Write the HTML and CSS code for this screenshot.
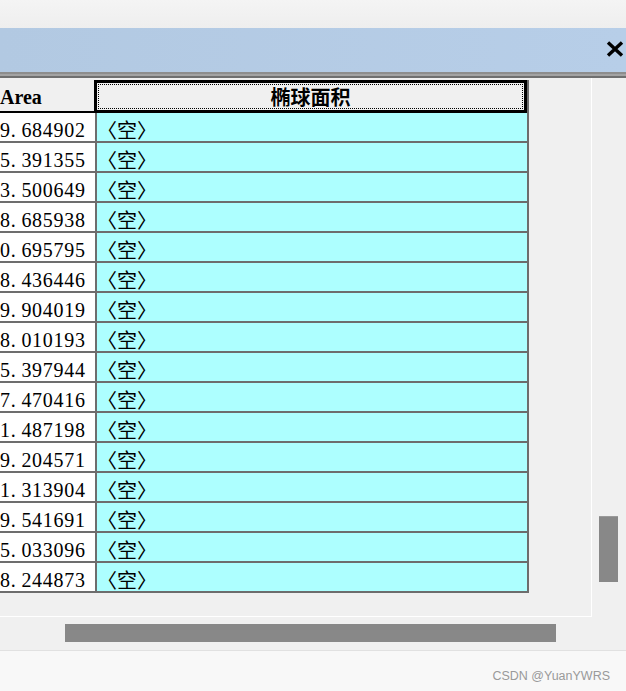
FILE: index.html
```html
<!DOCTYPE html>
<html>
<head>
<meta charset="utf-8">
<link rel="stylesheet" href="styles.css">
</head>
<body>
<div class="window">
  <div class="topbar"></div>
  <div class="titlebar">
    <svg class="close" width="18" height="16" viewBox="0 0 18 16"><path d="M2 1.5 L16 14.5 M16 1.5 L2 14.5" stroke="#000" stroke-width="3.4" stroke-linecap="butt"/></svg>
  </div>
  <div class="sep"></div>
  <div class="main">
    <div class="left">
      <div class="viewport">
        <div class="table">
          <div class="thead">
            <div class="th th-area"><span>Area</span></div>
            <div class="th th-cn"><div class="focus">椭球面积</div></div>
          </div>
          <div class="row"><div class="td num">9<span class="dot">.</span>684902</div><div class="td null">〈空〉</div></div>
          <div class="row"><div class="td num">5<span class="dot">.</span>391355</div><div class="td null">〈空〉</div></div>
          <div class="row"><div class="td num">3<span class="dot">.</span>500649</div><div class="td null">〈空〉</div></div>
          <div class="row"><div class="td num">8<span class="dot">.</span>685938</div><div class="td null">〈空〉</div></div>
          <div class="row"><div class="td num">0<span class="dot">.</span>695795</div><div class="td null">〈空〉</div></div>
          <div class="row"><div class="td num">8<span class="dot">.</span>436446</div><div class="td null">〈空〉</div></div>
          <div class="row"><div class="td num">9<span class="dot">.</span>904019</div><div class="td null">〈空〉</div></div>
          <div class="row"><div class="td num">8<span class="dot">.</span>010193</div><div class="td null">〈空〉</div></div>
          <div class="row"><div class="td num">5<span class="dot">.</span>397944</div><div class="td null">〈空〉</div></div>
          <div class="row"><div class="td num">7<span class="dot">.</span>470416</div><div class="td null">〈空〉</div></div>
          <div class="row"><div class="td num">1<span class="dot">.</span>487198</div><div class="td null">〈空〉</div></div>
          <div class="row"><div class="td num">9<span class="dot">.</span>204571</div><div class="td null">〈空〉</div></div>
          <div class="row"><div class="td num">1<span class="dot">.</span>313904</div><div class="td null">〈空〉</div></div>
          <div class="row"><div class="td num">9<span class="dot">.</span>541691</div><div class="td null">〈空〉</div></div>
          <div class="row"><div class="td num">5<span class="dot">.</span>033096</div><div class="td null">〈空〉</div></div>
          <div class="row"><div class="td num">8<span class="dot">.</span>244873</div><div class="td null">〈空〉</div></div>
        </div>
      </div>
      <div class="hscroll"><div class="hthumb"></div></div>
    </div>
    <div class="vscroll"><div class="vthumb"></div></div>
  </div>
  <div class="footer"><span>CSDN @YuanYWRS</span></div>
</div>
</body>
</html>
```

FILE: styles.css
```css
* { box-sizing: border-box; }
html, body { margin: 0; padding: 0; }
body {
  width: 626px;
  height: 691px;
  overflow: hidden;
  background: #f0f0f0;
  font-family: "Liberation Serif", "Noto Sans CJK SC", serif;
}
.window { display: flex; flex-direction: column; width: 626px; height: 691px; }
.topbar { height: 28px; background: linear-gradient(#f4f4f4, #eeeeee); }
.titlebar {
  height: 44px;
  background: linear-gradient(90deg, #b2c9e2, #b7cee8);
  display: flex;
  justify-content: flex-end;
  align-items: center;
  padding-right: 2px;
  padding-bottom: 3px;
}
.close { display: block; }
.sep {
  height: 6px;
  background: #a3a3a3;
  border-top: 2px solid #8d8d8d;
  border-bottom: 2px solid #6f6f6f;
}
.main {
  height: 573px;
  display: flex;
  background: #f0f0f0;
  border-bottom: 1px solid #e1e1e1;
}
.left { width: 592px; display: flex; flex-direction: column; }
.viewport {
  height: 539px;
  width: 592px;
  padding-top: 2px;
  overflow: hidden;
  border-right: 1px solid #ffffff;
  border-bottom: 1px solid #ffffff;
}
.table {
  width: 529px;
  border-right: 2px solid #6d6d6d;
}
.thead { display: flex; height: 33px; }
.th {
  font-weight: 700;
  font-size: 20px;
  color: #000;
  background: #f0f0f0;
}
.th-area {
  width: 94px;
  border-bottom: 2px solid #000;
  padding-top: 6px;
  line-height: 22px;
  white-space: nowrap;
}
.th-cn {
  width: 433px;
  border: 3px solid #000;
  padding: 1px;
}
.focus {
  height: 100%;
  border: 1px dotted #000;
  text-align: center;
  font-family: "Noto Sans CJK SC", sans-serif;
  font-weight: 700;
  font-size: 20px;
  line-height: 22px;
  padding-top: 1px;
}
.row { display: flex; height: 30px; border-bottom: 2px solid #6d6d6d; }
.td { height: 28px; padding-top: 6px; line-height: 22px; font-size: 20px; color: #000; white-space: nowrap; }
.num {
  width: 97px;
  background: #ffffff;
  border-right: 2px solid #6d6d6d;
  text-align: right;
  padding-right: 10px;
  letter-spacing: 0.7px;
  overflow: hidden;
}
.dot { margin-right: 5px; }
.null {
  width: 430px;
  background: #adffff;
  font-family: "Noto Sans CJK SC", sans-serif;
  padding-left: 0;
}
.hscroll { height: 33px; padding-top: 7px; padding-left: 65px; }
.hthumb { width: 491px; height: 18px; background: #888888; }
.vscroll { flex: 1; padding-top: 438px; padding-left: 7px; }
.vthumb { width: 19px; height: 66px; background: #888888; border-top: 1px solid #9a9a9a; }
.footer {
  height: 40px;
  background: #f8f8f8;
  display: flex;
  justify-content: flex-end;
  padding-right: 16px;
  padding-top: 18px;
  font-family: "Liberation Sans", Arial, sans-serif;
  font-size: 12.5px;
  line-height: 14px;
  color: #9a9a9a;
}
```
